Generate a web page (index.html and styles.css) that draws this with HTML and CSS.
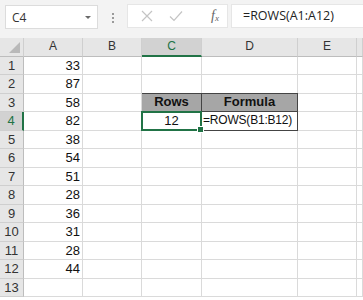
FILE: index.html
```html
<!DOCTYPE html>
<html lang="en">
<head>
    <meta charset="UTF-8">
    <title>ROWS function</title>
    <link rel="stylesheet" href="styles.css">
</head>
<body>
<div class="toolbar">
    <div class="namebox">
        <span>C4</span>
        <span class="drop"></span>
    </div>
    <div class="grip"><i></i><i></i><i></i></div>
    <div class="buttons">
        <svg class="btn" width="12" height="12" viewBox="0 0 12 12"><path d="M1 1 L11 11 M11 1 L1 11" stroke="#c4c4c4" stroke-width="1.2" fill="none"/></svg>
        <svg class="btn" width="14" height="12" viewBox="0 0 14 12"><path d="M1 6.5 L5 10.5 L13 1.5" stroke="#c4c4c4" stroke-width="1.2" fill="none"/></svg>
        <span class="fx">f<sub>x</sub></span>
    </div>
    <div class="formula">=ROWS(A1:A12)</div>
</div>

<div class="sheet">
    <div class="row head">
        <div class="corner"><span class="tri"></span></div>
        <div class="ch">A</div><div class="ch">B</div><div class="ch sel">C</div><div class="ch">D</div><div class="ch">E</div><div class="ch"></div>
    </div>
    <div class="row">
        <div class="rh">1</div><div class="cell num">33</div><div class="cell"></div><div class="cell"></div><div class="cell"></div><div class="cell"></div><div class="cell"></div>
    </div>
    <div class="row">
        <div class="rh">2</div><div class="cell num">87</div><div class="cell"></div><div class="cell"></div><div class="cell"></div><div class="cell"></div><div class="cell"></div>
    </div>
    <div class="row">
        <div class="rh">3</div><div class="cell num">58</div><div class="cell"></div><div class="cell th">Rows</div><div class="cell th">Formula</div><div class="cell"></div><div class="cell"></div>
    </div>
    <div class="row">
        <div class="rh sel">4</div><div class="cell num">82</div><div class="cell"></div><div class="cell td active">12<span class="handle"></span></div><div class="cell td text">=ROWS(B1:B12)</div><div class="cell"></div><div class="cell"></div>
    </div>
    <div class="row">
        <div class="rh">5</div><div class="cell num">38</div><div class="cell"></div><div class="cell"></div><div class="cell"></div><div class="cell"></div><div class="cell"></div>
    </div>
    <div class="row">
        <div class="rh">6</div><div class="cell num">54</div><div class="cell"></div><div class="cell"></div><div class="cell"></div><div class="cell"></div><div class="cell"></div>
    </div>
    <div class="row">
        <div class="rh">7</div><div class="cell num">51</div><div class="cell"></div><div class="cell"></div><div class="cell"></div><div class="cell"></div><div class="cell"></div>
    </div>
    <div class="row">
        <div class="rh">8</div><div class="cell num">28</div><div class="cell"></div><div class="cell"></div><div class="cell"></div><div class="cell"></div><div class="cell"></div>
    </div>
    <div class="row">
        <div class="rh">9</div><div class="cell num">36</div><div class="cell"></div><div class="cell"></div><div class="cell"></div><div class="cell"></div><div class="cell"></div>
    </div>
    <div class="row">
        <div class="rh">10</div><div class="cell num">31</div><div class="cell"></div><div class="cell"></div><div class="cell"></div><div class="cell"></div><div class="cell"></div>
    </div>
    <div class="row">
        <div class="rh">11</div><div class="cell num">28</div><div class="cell"></div><div class="cell"></div><div class="cell"></div><div class="cell"></div><div class="cell"></div>
    </div>
    <div class="row">
        <div class="rh">12</div><div class="cell num">44</div><div class="cell"></div><div class="cell"></div><div class="cell"></div><div class="cell"></div><div class="cell"></div>
    </div>
    <div class="row">
        <div class="rh">13</div><div class="cell"></div><div class="cell"></div><div class="cell"></div><div class="cell"></div><div class="cell"></div><div class="cell"></div>
    </div>
</div>
</body>
</html>
```

FILE: styles.css
```css
body {
    margin: 0;
    background: #fff;
    font-family: "Liberation Sans", Arial, sans-serif;
    overflow: hidden;
}

/* formula bar */
.toolbar {
    height: 38px;
    box-sizing: border-box;
    background: #f3f3f3;
    display: flex;
    align-items: flex-start;
    padding: 4px 0 0 5px;
}

.namebox {
    width: 93px;
    height: 24px;
    box-sizing: border-box;
    margin-top: 1px;
    background: #fff;
    border: 1px solid #dcdcdc;
    display: flex;
    align-items: center;
    justify-content: space-between;
    padding: 0 6px 0 6px;
    font-family: "Open Sans", sans-serif;
    font-size: 12px;
    color: #333;
}

.drop {
    width: 0;
    height: 0;
    border-left: 3px solid transparent;
    border-right: 3px solid transparent;
    border-top: 3px solid #6a6a6a;
}

.grip {
    width: 29px;
    display: flex;
    flex-direction: column;
    align-items: center;
    gap: 2px;
    padding-top: 9px;
}

.grip i {
    width: 2px;
    height: 2px;
    background: #9a9a9a;
}

.buttons {
    width: 101px;
    height: 24px;
    box-sizing: border-box;
    background: #fff;
    border: 1px solid #e6e6e6;
    display: flex;
    align-items: center;
    padding-left: 13px;
    gap: 16px;
}

.fx {
    font-family: "Liberation Serif", serif;
    font-style: italic;
    font-size: 14px;
    color: #666;
    margin-left: 12px;
}

.fx sub {
    font-size: 9px;
    vertical-align: -1px;
}

.formula {
    flex: 1;
    margin-left: 3px;
    height: 24px;
    box-sizing: border-box;
    background: #fff;
    border: 1px solid #e6e6e6;
    border-right: none;
    padding-left: 11px;
    font-family: "Open Sans", sans-serif;
    font-size: 12.5px;
    line-height: 22px;
    color: #222;
}

/* worksheet */
.row {
    display: grid;
    grid-template-columns: 24px 59px 59px 60px 96px 59px 1fr;
    height: 18.5px;
}

.row > div {
    box-sizing: border-box;
    border-right: 1px solid #dadada;
    border-bottom: 1px solid #dadada;
    font-size: 13px;
    line-height: 17px;
    color: #111;
    white-space: nowrap;
}

.row.head > div {
    background: #e6e6e6;
    border-right-color: #cfcfcf;
    border-bottom-color: #bdbdbd;
    text-align: center;
    font-size: 12px;
    color: #333;
}

.row.head .corner {
    position: relative;
}

.tri {
    position: absolute;
    right: 3px;
    bottom: 3px;
    width: 0;
    height: 0;
    border-left: 11px solid transparent;
    border-bottom: 11px solid #b9b9b9;
}

.row.head .ch.sel {
    background: #d2d2d2;
    color: #217346;
    border-bottom: 2px solid #217346;
}

.rh {
    background: #e6e6e6;
    text-align: center;
    font-size: 12px;
    color: #333 !important;
    border-right-color: #bdbdbd !important;
    border-bottom-color: #cfcfcf !important;
}

.rh.sel {
    background: #d2d2d2;
    color: #217346 !important;
    border-right: 2px solid #217346 !important;
}

.num {
    text-align: right;
    padding-right: 2px;
}

.row > .th {
    background: #a6a6a6;
    font-weight: bold;
    text-align: center;
    border-top: 1px solid #444;
    border-right-color: #444;
    border-bottom-color: #444;
    line-height: 16px;
    margin-top: -1px;
    height: calc(100% + 1px);
}

.row > .td {
    border-bottom-color: #444;
    border-right-color: #444;
    text-align: center;
}

.row > .text {
    text-align: left;
    padding-left: 1px;
    font-size: 12px;
    letter-spacing: -0.2px;
}

.row > .active {
    position: relative;
    border: 2px solid #217346;
    margin-left: -1px;
    margin-top: -1px;
    height: calc(100% + 1px);
    line-height: 15px;
}

.handle {
    position: absolute;
    right: -4px;
    bottom: -4px;
    width: 5px;
    height: 5px;
    background: #217346;
    border: 1px solid #fff;
}
```
